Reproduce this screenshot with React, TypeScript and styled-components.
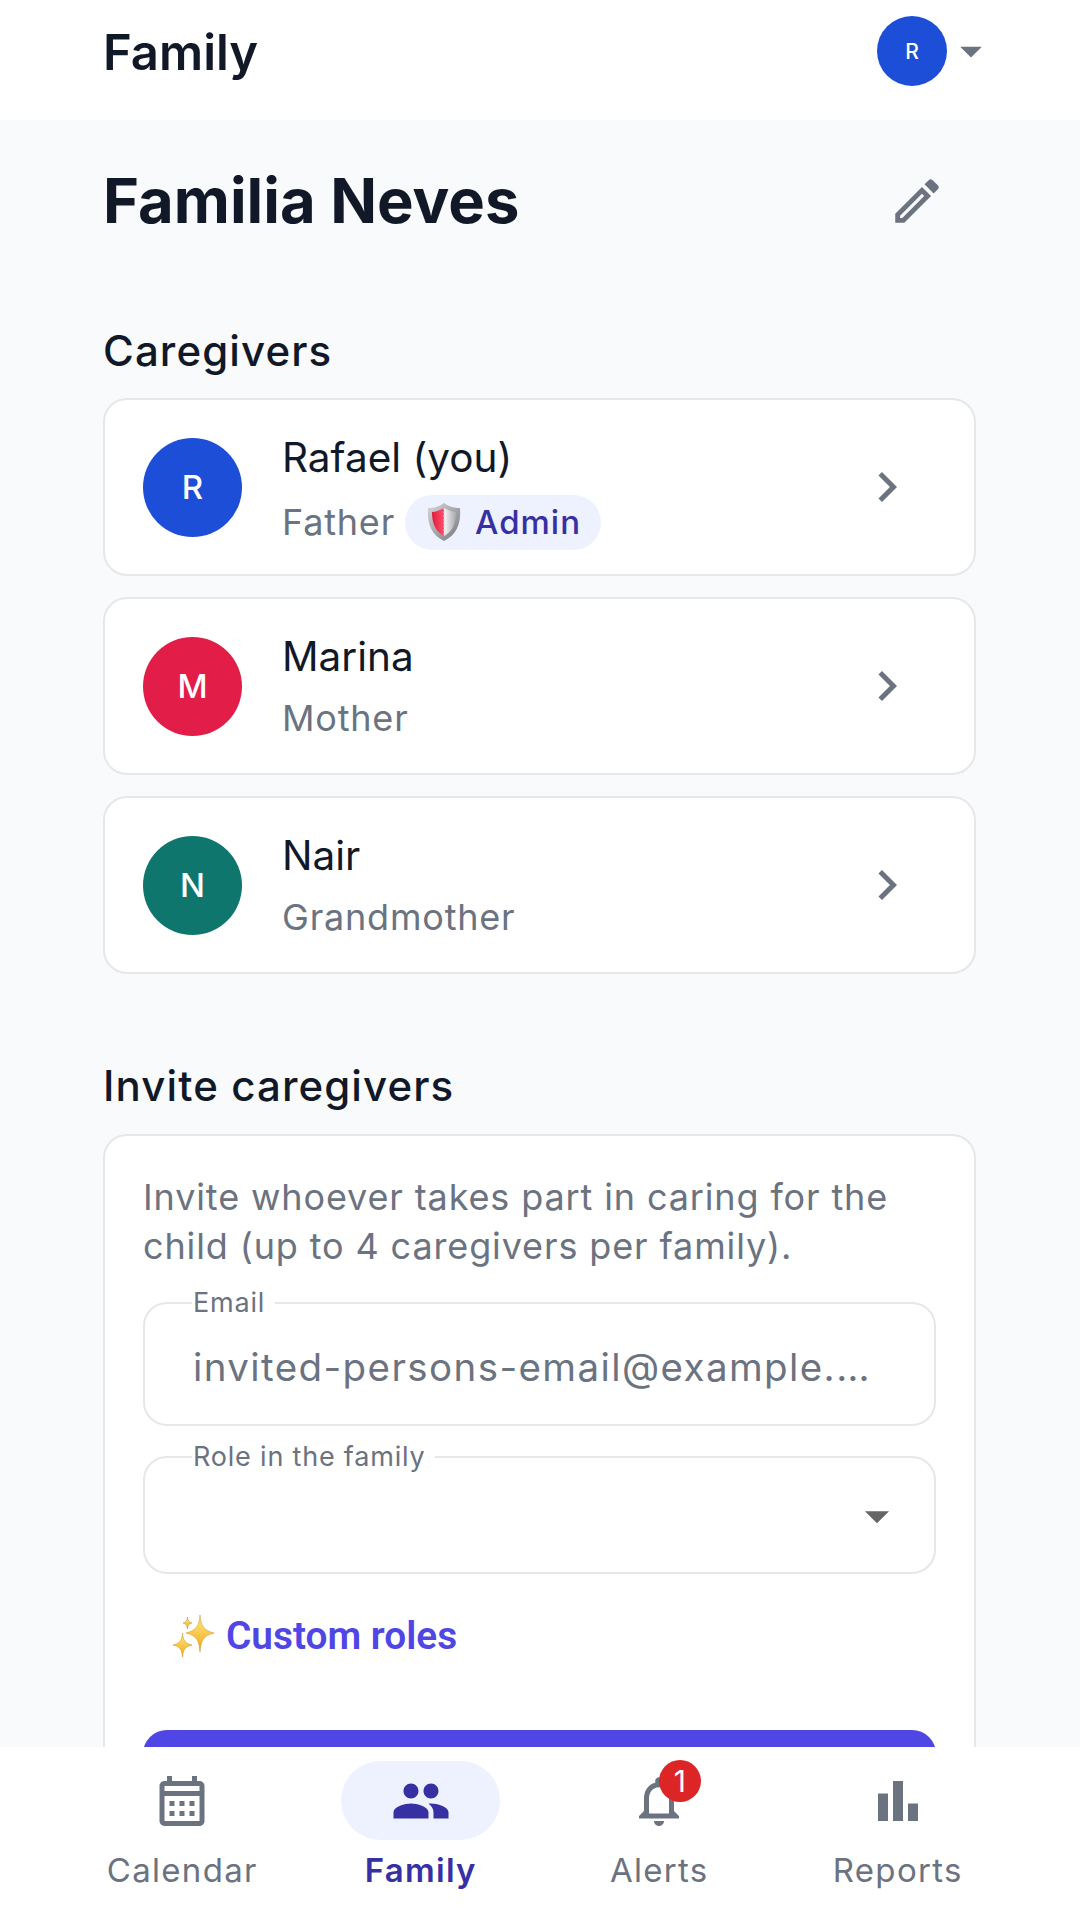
import React from "react";
import styled, { createGlobalStyle } from "styled-components";
import {
  MdArrowDropDown,
  MdBarChart,
  MdChevronRight,
  MdOutlineCalendarMonth,
  MdOutlineEdit,
  MdOutlineNotifications,
  MdPeople,
} from "react-icons/md";

const caregivers = [
  { initial: "R", name: "Rafael (you)", role: "Father", color: "#1d4ed8", admin: true },
  { initial: "M", name: "Marina", role: "Mother", color: "#e11d48", admin: false },
  { initial: "N", name: "Nair", role: "Grandmother", color: "#0f766e", admin: false },
];

const ShieldEmoji = () => (
  <svg width="36" height="40" viewBox="0 0 36 40">
    <defs>
      <linearGradient id="rim" x1="0" y1="0" x2="1" y2="1">
        <stop offset="0" stopColor="#d8d8dc" />
        <stop offset="1" stopColor="#77777d" />
      </linearGradient>
      <linearGradient id="red" x1="0" y1="0" x2="1" y2="0">
        <stop offset="0" stopColor="#e01d3a" />
        <stop offset="1" stopColor="#ff4d6d" />
      </linearGradient>
      <linearGradient id="silver" x1="0" y1="0" x2="1" y2="0">
        <stop offset="0" stopColor="#f6f6f6" />
        <stop offset="1" stopColor="#a9a9ae" />
      </linearGradient>
    </defs>
    <path d="M18 1 C23 5 29 6 34 6 C35 20 32 32 18 39 C4 32 1 20 2 6 C7 6 13 5 18 1Z" fill="url(#rim)" />
    <path d="M18 6 C14 8 10 10 6 10 C6 21 9 29 18 34Z" fill="url(#red)" />
    <path d="M18 6 C22 8 26 10 30 10 C30 21 27 29 18 34Z" fill="url(#silver)" />
    <path d="M18 6 V34" stroke="#f7c7cf" strokeWidth="1" strokeDasharray="2 1.5" />
  </svg>
);

const SparklesEmoji = () => (
  <svg width="43" height="42" viewBox="0 0 43 42">
    <defs>
      <linearGradient id="gold" x1="0" y1="0" x2="0" y2="1">
        <stop offset="0" stopColor="#ffe98a" />
        <stop offset="1" stopColor="#f3a90f" />
      </linearGradient>
    </defs>
    <path d="M28 0 C28.8 10 31 15.5 42 18 C31 20.5 28.8 26 28 37 C27.2 26 25 20.5 14 18 C25 15.5 27.2 10 28 0Z" fill="url(#gold)" stroke="#c98a10" strokeWidth="0.5" />
    <path d="M10.5 18 C11 25 13 28.5 20 30 C13 31.5 11 35 10.5 42 C10 35 8 31.5 1 30 C8 28.5 10 25 10.5 18Z" fill="url(#gold)" stroke="#c98a10" strokeWidth="0.5" />
    <path d="M15.5 2 C15.8 5.5 16.8 7.2 20 8 C16.8 8.8 15.8 10.5 15.5 14 C15.2 10.5 14.2 8.8 11 8 C14.2 7.2 15.2 5.5 15.5 2Z" fill="url(#gold)" stroke="#c98a10" strokeWidth="0.5" />
  </svg>
);

const App = () => {
  return (
    <Screen>
      <GlobalStyle />
      <Header>
        <HeaderTitle>Family</HeaderTitle>
        <AccountMenu>
          <HeaderAvatar>R</HeaderAvatar>
          <MdArrowDropDown size={52} color="#6b7280" />
        </AccountMenu>
      </Header>
      <Main>
        <FamilyRow>
          <FamilyName>Familia Neves</FamilyName>
          <MdOutlineEdit size={58} color="#6b7280" />
        </FamilyRow>
        <SectionTitle>Caregivers</SectionTitle>
        <CardList>
          {caregivers.map((person) => (
            <PersonCard key={person.initial}>
              <Avatar $color={person.color}>{person.initial}</Avatar>
              <PersonInfo>
                <PersonName>{person.name}</PersonName>
                <PersonMeta $admin={person.admin}>
                  <PersonRole>{person.role}</PersonRole>
                  {person.admin && (
                    <AdminPill>
                      <ShieldEmoji />
                      Admin
                    </AdminPill>
                  )}
                </PersonMeta>
              </PersonInfo>
              <MdChevronRight size={60} color="#6b7280" />
            </PersonCard>
          ))}
        </CardList>
        <InviteTitle>Invite caregivers</InviteTitle>
        <InviteCard>
          <InviteText>
            Invite whoever takes part in caring for the child (up to 4 caregivers per family).
          </InviteText>
          <Field>
            <FieldLabel>Email</FieldLabel>
            <EmailInput placeholder="invited-persons-email@example.com" />
          </Field>
          <SelectField>
            <FieldLabel>Role in the family</FieldLabel>
            <SelectValue>
              <MdArrowDropDown size={58} color="#666666" />
            </SelectValue>
          </SelectField>
          <CustomRoles>
            <SparklesEmoji />
            Custom roles
          </CustomRoles>
          <InviteButton />
        </InviteCard>
      </Main>
      <BottomNav>
        <NavItem>
          <NavIcon>
            <MdOutlineCalendarMonth size={60} />
          </NavIcon>
          <NavLabel>Calendar</NavLabel>
        </NavItem>
        <NavItem $active>
          <NavIcon $active>
            <MdPeople size={60} />
          </NavIcon>
          <NavLabel>Family</NavLabel>
        </NavItem>
        <NavItem>
          <NavIcon>
            <MdOutlineNotifications size={60} />
            <Badge>1</Badge>
          </NavIcon>
          <NavLabel>Alerts</NavLabel>
        </NavItem>
        <NavItem>
          <NavIcon>
            <MdBarChart size={60} />
          </NavIcon>
          <NavLabel>Reports</NavLabel>
        </NavItem>
      </BottomNav>
    </Screen>
  );
};

export default App;

const GlobalStyle = createGlobalStyle`
  * {
    box-sizing: border-box;
  }
  body {
    margin: 0;
    background: #f9fafb;
    font-family: Inter, "Liberation Sans", sans-serif;
  }
`;

const Screen = styled.div`
  width: 1080px;
  height: 1920px;
  display: flex;
  flex-direction: column;
  overflow: hidden;
  color: #111827;
`;

const Header = styled.header`
  height: 120px;
  flex-shrink: 0;
  background: #fff;
  display: flex;
  align-items: flex-start;
  justify-content: space-between;
  padding: 16px 83px 0 103px;
`;

const HeaderTitle = styled.h1`
  margin: 1px 0 0;
  font-size: 49px;
  line-height: 72px;
  font-weight: 600;
`;

const AccountMenu = styled.div`
  display: flex;
  align-items: center;
  gap: 0;
  height: 70px;
`;

const HeaderAvatar = styled.div`
  width: 70px;
  height: 70px;
  margin-right: -2px;
  border-radius: 50%;
  background: #1d4ed8;
  color: #fff;
  font-size: 21px;
  font-weight: 500;
  display: flex;
  align-items: center;
  justify-content: center;
`;

const Main = styled.main`
  flex: 1;
  min-height: 0;
  overflow: hidden;
  padding: 42px 104px 0 103px;
`;

const FamilyRow = styled.div`
  display: flex;
  align-items: center;
  justify-content: space-between;
  padding-right: 30px;
  height: 78px;
`;

const FamilyName = styled.h2`
  margin: 0;
  font-size: 61.5px;
  font-weight: 700;
  line-height: 80px;
`;

const SectionTitle = styled.h3`
  margin: 81px 0 0;
  font-size: 42px;
  line-height: 60px;
  font-weight: 450;
  letter-spacing: 1.1px;
`;

const InviteTitle = styled(SectionTitle)`
  margin-top: 82px;
`;

const CardList = styled.div`
  margin-top: 17px;
  display: flex;
  flex-direction: column;
  gap: 21px;
`;

const PersonCard = styled.div`
  height: 178px;
  background: #fff;
  border: 2px solid #e5e7eb;
  border-radius: 24px;
  display: flex;
  align-items: center;
  padding: 0 57px 0 38px;
`;

const Avatar = styled.div<{ $color: string }>`
  width: 99px;
  height: 99px;
  flex-shrink: 0;
  border-radius: 50%;
  background: ${(p) => p.$color};
  color: #fff;
  font-size: 33px;
  font-weight: 500;
  display: flex;
  align-items: center;
  justify-content: center;
`;

const PersonInfo = styled.div`
  flex: 1;
  margin-left: 40px;
  padding-top: 6px;
  display: flex;
  flex-direction: column;
  gap: 8px;
`;

const PersonName = styled.div`
  font-size: 40.5px;
  line-height: 56px;
`;

const PersonMeta = styled.div<{ $admin: boolean }>`
  display: flex;
  align-items: ${(p) => (p.$admin ? "center" : "flex-start")};
  gap: 10px;
  height: 56px;
`;

const PersonRole = styled.span`
  font-size: 36px;
  line-height: 51px;
  letter-spacing: 0.8px;
  color: #6b7280;
`;

const AdminPill = styled.span`
  height: 55px;
  padding: 0 20px 0 21px;
  border-radius: 28px;
  background: #eef2ff;
  color: #3730a3;
  font-size: 33px;
  font-weight: 500;
  letter-spacing: 1px;
  display: flex;
  align-items: center;
  gap: 13px;
`;

const InviteCard = styled.div`
  margin-top: 18px;
  background: #fff;
  border: 2px solid #e5e7eb;
  border-radius: 24px;
  padding: 37px 38px 40px;
`;

const InviteText = styled.p`
  margin: 0;
  font-size: 36px;
  line-height: 49px;
  letter-spacing: 0.87px;
  color: #6b7280;
`;

const Field = styled.fieldset`
  margin: 15px 0 0;
  padding: 0 48px;
  height: 140px;
  border: 2px solid #e5e7eb;
  border-radius: 24px;
  min-width: 0;
`;

const SelectField = styled(Field)`
  height: 134px;
  margin-top: 14px;
`;

const FieldLabel = styled.legend`
  padding: 0 10px 0 1px;
  margin-left: -1px;
  font-size: 27px;
  line-height: 34px;
  letter-spacing: 0.8px;
  color: #6b7280;
`;

const EmailInput = styled.input`
  display: block;
  width: 100%;
  height: 94px;
  margin: 0;
  padding: 0 6px 0 0;
  border: none;
  outline: none;
  background: transparent;
  font-family: inherit;
  font-size: 38.5px;
  letter-spacing: 1.4px;
  text-overflow: ellipsis;
  &::placeholder {
    color: #6b7280;
    opacity: 1;
  }
`;

const SelectValue = styled.div`
  height: 84px;
  display: flex;
  align-items: center;
  justify-content: flex-end;
  margin-right: -20px;
`;

const CustomRoles = styled.div`
  margin: 37px 0 0 29px;
  display: flex;
  align-items: center;
  gap: 11px;
  font-family: Roboto, sans-serif;
  font-size: 38.8px;
  line-height: 50px;
  font-weight: 600;
  color: #4f46e5;
`;

const InviteButton = styled.div`
  margin-top: 69px;
  height: 110px;
  border-radius: 24px;
  background: #4f46e5;
`;

const BottomNav = styled.nav`
  height: 173px;
  flex-shrink: 0;
  background: #fff;
  display: grid;
  grid-template-columns: repeat(4, 1fr);
  padding: 14px 63px 0;
`;

const NavItem = styled.div<{ $active?: boolean }>`
  display: flex;
  flex-direction: column;
  align-items: center;
  color: ${(p) => (p.$active ? "#3730a3" : "#6b7280")};
  font-weight: ${(p) => (p.$active ? 600 : 400)};
`;

const NavIcon = styled.div<{ $active?: boolean }>`
  position: relative;
  width: 159px;
  height: 79px;
  border-radius: 40px;
  background: ${(p) => (p.$active ? "#eef2ff" : "transparent")};
  display: flex;
  align-items: center;
  justify-content: center;
`;

const Badge = styled.span`
  position: absolute;
  top: -1px;
  left: 79px;
  width: 42px;
  height: 42px;
  border-radius: 50%;
  background: #dc2626;
  color: #fff;
  font-size: 30px;
  display: flex;
  align-items: center;
  justify-content: center;
`;

const NavLabel = styled.span`
  margin-top: 8px;
  font-size: 33px;
  line-height: 44px;
  letter-spacing: 1.3px;
`;
